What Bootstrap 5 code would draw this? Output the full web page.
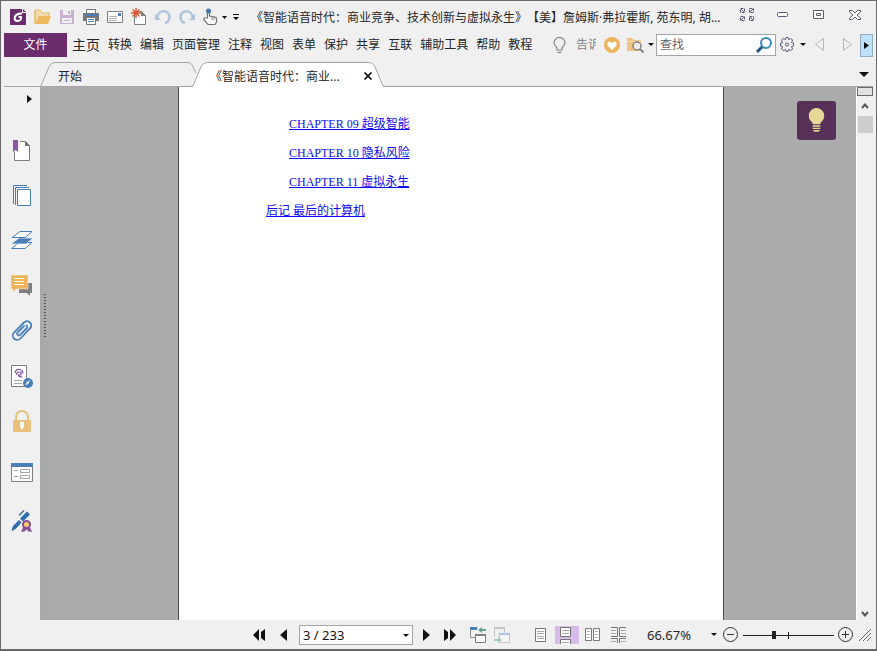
<!DOCTYPE html>
<html lang="zh-CN">
<head>
<meta charset="utf-8">
<meta name="viewport" content="width=device-width, initial-scale=1">
<title>PDF 阅读器</title>
<link href="https://cdn.jsdelivr.net/npm/bootstrap@5.3.0/dist/css/bootstrap.min.css" rel="stylesheet">
<style>
body{font-family:"Noto Sans","Noto Sans CJK SC",sans-serif;font-size:12px;line-height:18px;color:#262626;background:#f0f0f0}
.app{height:100vh;border:1px solid #6b686b;border-bottom-width:2px;background:#f0f0f0}
.plain{border:0;background:none;padding:0;color:inherit;display:flex;align-items:center;justify-content:center;flex:none}
svg{display:block;flex:none}
.titlebar{height:32px;padding-left:6px;padding-right:3px}
.tool{width:24px;height:24px}
.slim{width:22px;height:24px}
.hand-btn{width:32px;height:24px;gap:3px}
.caret-btn{width:10px;height:24px}
.win-btn{width:36px;height:28px;margin-bottom:4px}
.doc-title{margin-left:10px;padding-top:2px;text-spacing-trim:space-all}
.menubar{height:24px;padding-left:3px;padding-right:3px}
.file-btn{width:63px;height:24px;background:#6a2c6c;color:#fff;margin-right:5px}
.menu-list{gap:8px}
.menu-list a{text-decoration:none;white-space:nowrap;color:#262626}
.menu-list .home-link{font-size:14px}
.tell{width:20px;color:#808080;overflow:hidden;white-space:nowrap;justify-content:flex-start}
.find{width:120px;height:22px;border:1px solid #a5a5a5;background:#fff}
.find input{border:0;outline:0;background:none;width:90px;padding:0 3px;color:#333}
.find input::placeholder{color:#666;opacity:1}
.more-btn{width:13px;height:23px;background:#bfe1fb;border:1px solid #93adc2}
.tabs{height:30px;padding-left:39px}
.tabs::after{content:"";position:absolute;left:3px;right:3px;bottom:0;border-bottom:1px solid #a5a5a5}
.doc-tab{position:relative;height:25px;padding-left:18px;padding-top:6px}
.doc-tab svg.shape{position:absolute;left:0;top:0}
.tab-start{width:156px}
.tab-doc{width:192px;margin-left:-4px;z-index:2;padding-left:18px}
.doc-tab .label{position:relative;justify-content:flex-start}
.tab-x{position:relative;width:16px;height:16px;margin-right:8px}
.side{width:39px;padding-left:3px}
.side .plain{width:36px;height:45px;align-items:flex-start;padding-top:12px}
.side .expand{height:24px;margin-bottom:17px;padding:8px 0 0 14px}
.side .form-btn{margin-top:7px;padding-top:13px}
.side .sign-btn{margin-top:3px}
.desk{background:#ababab}
.splitter{width:6px;background:#a7a9ab;padding-left:3px;padding-bottom:74px}
.dots{width:4px;height:45px;background:conic-gradient(from 90deg at 1px 1px,transparent 270deg,#555 0) 0 0/3px 3px}
.sheet{width:546px;background:#fff;border:solid #4d4d4d;border-width:0 1px;padding:28px 87px}
.toc{font-family:"Liberation Serif","Noto Sans CJK SC",serif;gap:11px}
.toc a{color:#0d0df2;text-decoration:underline}
.toc .sub-item{padding-left:23px}
.tip{position:absolute;top:14px;right:20px;width:39px;height:39px;background:#573157;border-radius:3px}
.scroller{width:17px;background:#f0f0f0;border-left:1px solid #fff;margin-right:3px}
.split-box{height:9px;border:1px solid #6b6b6b;background:#e1e1e1;align-self:stretch}
.thumb{width:15px;height:17px;background:#cdcdcd}
.arrow-btn{width:16px;height:20px}
.arrow-down{height:12px}
.status{height:29px;font-size:13px;padding-left:246px;padding-top:1px}
.page-box{position:relative;width:114px;height:20px;margin:0 1px 0 4px}
.page-box select{appearance:none;width:100%;height:100%;border:1px solid #a5a5a5;border-radius:0;background:#fff;padding:0 3px;line-height:18px;color:#111}
.page-box svg{position:absolute;right:4px;top:9px;pointer-events:none}
.layouts{margin-left:15px;gap:2px}
.zoom-range{position:relative;width:91px;height:16px}
.zoom-range::after{content:"";position:absolute;left:45px;top:5px;width:1px;height:7px;background:#222}
.zoom-range input{appearance:none;display:block;width:100%;height:16px;margin:0;background:linear-gradient(#222,#222) 0 8px/100% 1px no-repeat}
.zoom-range input::-webkit-slider-thumb{appearance:none;width:4px;height:8px;background:#222}
.on{background:#d7bbe8}
</style>
<script src="https://cdn.jsdelivr.net/npm/bootstrap@5.3.0/dist/js/bootstrap.bundle.min.js"></script>
</head>
<body>
<div class="app d-flex flex-column overflow-hidden">
<header>
 <div class="titlebar d-flex align-items-center">
  <button class="plain tool" aria-label="应用"><svg width="20" height="18" viewBox="0 0 20 18"><path d="M1 1h12v4h4v12H1z" fill="#6a2c6c"/><path d="M14 1l3 3h-3z" fill="#6a2c6c"/><path d="M13 5.500Q8 5 6 8.500 4.500 13 9 13 12.500 12.500 12 9H9.500" stroke="#fff" stroke-width="2" fill="none"/></svg></button>
  <button class="plain tool" aria-label="打开"><svg width="18" height="18" viewBox="0 0 18 18"><path d="M1 15V2h5l2 3h7v3" fill="#f5dcae" stroke="#e9b566"/><path d="M1 16L5 8h12l-3 8z" fill="#efb85f"/><path d="M1 16V3" stroke="#e9b566"/></svg></button>
  <button class="plain tool" aria-label="保存"><svg width="14" height="14" viewBox="0 0 14 14"><path d="M0 0h14v14H0z" fill="#c9b0d3"/><path d="M3 0h8v5H3zM2 8h10v5H2z" fill="#f0f0f0"/><path d="M8 1h2v3H8zM4 10h6v1H4z" fill="#c9b0d3"/></svg></button>
  <button class="plain tool" aria-label="打印"><svg width="16" height="16" viewBox="0 0 16 16"><path d="M0 4h16v8H0z" fill="#777"/><path d="M3.500.500h9v4h-9z" fill="#fff" stroke="#777"/><path d="M2 5h12v2H2z" fill="#4a80b8"/><path d="M3.500 8.500h9v7h-9z" fill="#fff" stroke="#777"/><path d="M5 10.500h6M5 12.500h6" stroke="#4a80b8"/></svg></button>
  <button class="plain tool" aria-label="邮件"><svg width="16" height="14" viewBox="0 0 16 14"><path d="M.5 1.500h15v11H.5z" fill="#fff" stroke="#808080"/><path d="M2 6.500h8M2 8.500h8M2 10.500h8" stroke="#b5b5b5"/><path d="M11 3h3v3h-3z" fill="#4a80b8"/></svg></button>
  <button class="plain tool" aria-label="新建"><svg width="16" height="18" viewBox="0 0 16 18"><path d="M3.500 3.500h7l4 4v9h-11z" fill="#fff" stroke="#808080"/><path d="M10 3l5 5h-5z" fill="#808080"/><path d="M5 0v10M0 5h10M1.500 1.500l7 7M8.500 1.500l-7 7" stroke="#d9532f" stroke-width="1.400"/></svg></button>
  <button class="plain tool" aria-label="撤销"><svg width="16" height="16" viewBox="0 0 16 16"><path d="M2.500 8A6 6 0 1 1 10 14" fill="none" stroke="#adc5de" stroke-width="2.500"/><path d="M0 5v6h6z" fill="#adc5de"/></svg></button>
  <button class="plain tool" aria-label="重做"><svg width="16" height="16" viewBox="0 0 16 16"><path d="M13.500 8A6 6 0 1 0 6 14" fill="none" stroke="#adc5de" stroke-width="2.500"/><path d="M16 5v6h-6z" fill="#adc5de"/></svg></button>
  <button class="plain hand-btn" aria-label="手形工具"><svg width="16" height="18" viewBox="0 0 16 18"><path d="M4.500 10V3Q5.500 1 6.500 3V8L12 9l1.500 1v4L12 16.500H5L1 12V10z" fill="#fff" stroke="#707070" stroke-width="1.200"/><path d="M9 9v3M11 9v3" stroke="#808080"/><circle cx="5.500" cy="3" r="2.500" fill="#3f78b3"/></svg><svg width="5" height="3"><path d="M0 0h5L2.500 3z" fill="#111"/></svg></button>
  <button class="plain caret-btn" aria-label="自定义"><svg width="6" height="6"><path d="M0 0h6v1H0zM0 3h6L3 6z" fill="#111"/></svg></button>
  <div class="doc-title flex-fill text-truncate">《智能语音时代：商业竞争、技术创新与虚拟永生》【美】詹姆斯·弗拉霍斯, 苑东明, 胡...</div>
  <button class="plain win-btn" aria-label="全屏"><svg width="14" height="14" viewBox="0 0 14 14" fill="none" stroke="#5e5c72"><path d="M.5.5H4.500V4.500H.5zM9.500.5h4v4h-4zM.5 8.500h4v4h-4zM9.500 8.500h4v4h-4z" stroke-dasharray="3 1"/><path d="M1 1l3 3M13 1l-3 3M1 12l3-3M13 12l-3-3"/></svg></button>
  <button class="plain win-btn" aria-label="最小化"><svg width="12" height="6"><rect x=".5" y=".5" width="10" height="4" rx="1" fill="#fff" stroke="#5e5c72"/></svg></button>
  <button class="plain win-btn" aria-label="还原"><svg width="12" height="10" fill="#fff" stroke="#5e5c72"><path d="M.5.5h10v8H.5zM3.500 3.500h4v2h-4z"/></svg></button>
  <button class="plain win-btn" aria-label="关闭"><svg width="12" height="10" viewBox="0 0 12 10"><path d="M.5.5h3L6 3l2.500-2.500h3V2L8 5l3.500 3v1.500h-3L6 7 3.500 9.500h-3V8L4 5 .5 2z" fill="#fff" stroke="#5e5c72"/></svg></button>
 </div>
 <nav class="menubar d-flex align-items-center" aria-label="主菜单">
  <button class="plain file-btn">文件</button>
  <div class="menu-list d-flex align-items-center"><a class="home-link" href="#">主页</a><a href="#">转换</a><a href="#">编辑</a><a href="#">页面管理</a><a href="#">注释</a><a href="#">视图</a><a href="#">表单</a><a href="#">保护</a><a href="#">共享</a><a href="#">互联</a><a href="#">辅助工具</a><a href="#">帮助</a><a href="#">教程</a></div>
  <div class="d-flex align-items-center ms-auto">
   <button class="plain tool" aria-label="提示"><svg width="14" height="16" viewBox="0 0 14 16" fill="none" stroke="#858585" stroke-width="1.200"><path d="M4 11Q1 8 1 6a5.500 5.500 0 0 1 11 0Q12 8 9 11v2H4zM4.500 15.400h4"/></svg></button>
   <button class="plain tell ms-1">告诉</button>
   <button class="plain tool ms-1" aria-label="收藏"><svg width="16" height="16" viewBox="0 0 16 16"><circle cx="8" cy="8" r="8" fill="#ecb35b"/><path d="M8 13L3.500 8.500Q2.500 5 5.500 4.500 7 4.500 8 6 9 4.500 10.500 4.500 13.500 5 12.500 8.500z" fill="#fff"/></svg></button>
   <button class="plain slim" aria-label="查找文件夹"><svg width="18" height="16" viewBox="0 0 18 16"><path d="M1 14V1h5l2 2h7v11z" fill="#efc382"/><path d="M1 4.500h14" stroke="#f7ddb3"/><circle cx="11" cy="9" r="4" fill="#f0f0f0" stroke="#858585" stroke-width="1.500"/><path d="M14 12l3.500 3.500" stroke="#858585" stroke-width="2"/></svg></button>
   <button class="plain caret-btn" aria-label="查找选项"><svg width="6" height="4"><path d="M0 0h6L3 3z" fill="#111"/></svg></button>
   <form class="find d-flex align-items-center justify-content-between"><input type="text" placeholder="查找" aria-label="查找"><button type="button" class="plain" aria-label="搜索"><svg width="20" height="18" viewBox="0 0 20 18"><path d="M2 16l6-6" stroke="#1e5180" stroke-width="3"/><circle cx="11" cy="7" r="5" fill="#fff" stroke="#388cba" stroke-width="2"/></svg></button></form>
   <button class="plain slim" aria-label="设置"><svg width="16" height="16" viewBox="0 0 16 16" fill="none" stroke="#5e5c72"><path d="M7 .5h2l.5 2 2.500-1 1.500 1.500-1 2.500 2 .5v3l-2 .5 1 2.500-1.500 1.500-2.500-1-.5 2H7l-.5-2-2.500 1L2.500 12l1-2.500-2-.5V6l2-.5-1-2.500L4 1.500l2.500 1z"/><circle cx="8" cy="7.500" r="1.500"/></svg></button>
   <button class="plain caret-btn" aria-label="设置选项"><svg width="6" height="4"><path d="M0 0h6L3 3z" fill="#111"/></svg></button>
   <button class="plain tool" aria-label="上一个"><svg width="10" height="14"><path d="M8.500.5v12L.5 6.500z" fill="none" stroke="#b5b5b5"/></svg></button>
   <button class="plain tool ms-1" aria-label="下一个"><svg width="10" height="14"><path d="M.5.5v12l8-6z" fill="none" stroke="#b5b5b5"/></svg></button>
   <button class="plain more-btn" aria-label="更多"><svg width="5" height="7"><path d="M0 0v7l5-3.500z" fill="#111"/></svg></button>
  </div>
 </nav>
 <div class="tabs position-relative d-flex align-items-end">
  <div class="doc-tab tab-start"><svg class="shape" width="156" height="25"><path d="M.5 24.500L9 5Q11 .5 15 .5H147Q152 .5 153 5L156 11" fill="none" stroke="#a5a5a5"/></svg><button class="plain label">开始</button></div>
  <div class="doc-tab tab-doc d-flex align-items-start justify-content-between"><svg class="shape" width="192" height="25"><path d="M.5 25L9 5Q11 .5 15 .5H176Q181 .5 183 5L191.500 25" fill="#fff" stroke="#a5a5a5"/></svg><button class="plain label">《智能语音时代：商业...</button><button class="plain tab-x" aria-label="关闭标签"><svg width="8" height="8"><path d="M.5.5l7 7M7.500.5l-7 7" stroke="#111" stroke-width="1.600"/></svg></button></div>
  <button class="plain ms-auto tool" aria-label="标签列表"><svg width="10" height="6"><path d="M0 0h10L5 5z" fill="#111"/></svg></button>
 </div>
</header>
<main class="d-flex flex-fill overflow-hidden">
 <aside class="side">
  <button class="plain expand" aria-label="展开"><svg width="6" height="8"><path d="M1 0v8l5-4z" fill="#111"/></svg></button>
  <button class="plain" aria-label="书签"><svg width="18" height="22" viewBox="0 0 18 22"><path d="M1.500 1.500h11l4 4v15h-15z" fill="#fff" stroke="#808080"/><path d="M12 1l5 5h-5z" fill="#707070"/><path d="M0 0h7v13L4 10 0 13z" fill="#f0f0f0"/><path d="M0 0h5v12l-2.500-2L0 12z" fill="#8a55a3"/></svg></button>
  <button class="plain" aria-label="页面"><svg width="18" height="22" viewBox="0 0 18 22" fill="none" stroke="#4a80b8"><path d="M.5 19V.5H14M2.500 20V2.500H16"/><path d="M4.500 4.500h13v16h-13z" fill="#fff"/></svg></button>
  <button class="plain" aria-label="图层"><svg width="22" height="20" viewBox="0 0 22 20"><path d="M.5 18.500L8 12.500H21L14 18.500z" fill="#fff" stroke="#4a80b8"/><path d="M0 14L8 8h14l-7 6z" fill="#4a80b8" stroke="#f0f0f0" stroke-width=".7"/><path d="M1 7.500L9 1.500H21L14 7.500z" fill="#fff" stroke="#4a80b8"/></svg></button>
  <button class="plain" aria-label="注释"><svg width="22" height="22" viewBox="0 0 22 22"><path d="M8 8h13v10h-2v3l-3-3H8z" fill="#808080"/><path d="M0 0h17v14H5l-3 4v-4H0z" fill="#efb45a" stroke="#f0f0f0" stroke-width=".5"/><path d="M3 3.500h10M3 6.500h10M3 9.500h10" stroke="#fff"/></svg></button>
  <button class="plain" aria-label="附件"><svg width="20" height="22" viewBox="0 0 20 22" fill="none" stroke="#4a80b8" stroke-width="1.800" stroke-linecap="round"><path d="M8 6.500L12 2.500A4 4 0 0 1 18 8.500L8.500 18.500A4.300 4.300 0 0 1 2 12.500L10.500 4M14.500 5.500A2 2 0 0 1 14.500 8.500L8 15A1.800 1.800 0 0 1 5.500 12.500L12 6"/></svg></button>
  <button class="plain" aria-label="签名"><svg width="22" height="24" viewBox="0 0 22 24"><path d="M.5.500h15v21H.5z" fill="#fff" stroke="#808080"/><path d="M4 8Q5 4 8 4.500q4 0 4 4M5.500 10Q5.500 7 8 7h2v3H7.500q0 2 4 2" fill="none" stroke="#8a55a3" stroke-width="1.200"/><path d="M3 15.500h8M3 18.500h8" stroke="#a5a5a5"/><circle cx="17" cy="18" r="5" fill="#4a80b8"/><path d="M14.500 20.500l1-3 3.500-2.500-1.500 3.500z" fill="#fff"/></svg></button>
  <button class="plain" aria-label="安全"><svg width="18" height="22" viewBox="0 0 18 22"><path d="M3 11V7a6 6 0 0 1 12 0v4" fill="none" stroke="#ebc07b" stroke-width="2"/><rect y="10" width="18" height="12" rx="1" fill="#ebc07b"/><path d="M7 12h4v4l-1 3H8l-1-3z" fill="#fff"/></svg></button>
  <button class="plain form-btn" aria-label="表单域"><svg width="22" height="19" viewBox="0 0 22 19"><path d="M.5.500h21v18H.5z" fill="#fff" stroke="#808080"/><path d="M0 0h22v4H0z" fill="#4a80b8"/><path d="M3 7.500h4M3 13.500h4M9.500 6.500h9v3h-9zM9.500 12.500h9v3h-9z" fill="none" stroke="#a5a5a5"/></svg></button>
  <button class="plain sign-btn" aria-label="数字签名"><svg width="22" height="22" viewBox="0 0 22 22"><path d="M1 20.500l1.500-4.500L8 10.500l2 2-5.500 6z" fill="#2f6dad" stroke="#2f6dad" stroke-linejoin="round"/><path d="M10 8.500l6-6 2 2-6 6zM8 5.500L13 .5" fill="#2f6dad" stroke="#2f6dad" stroke-width="1.400"/><path d="M10 22l2.500-6h6l2.500 6-3.500-.5-2-2-2 2z" fill="#8a55a3"/><circle cx="15.500" cy="14.500" r="3.500" fill="#fbd06a" stroke="#8a4a9a" stroke-width="2"/></svg></button>
 </aside>
 <div class="desk d-flex flex-fill position-relative">
  <div class="splitter d-flex align-items-center"><div class="dots"></div></div>
  <article class="sheet mx-auto">
   <div class="toc d-flex flex-column align-items-start"><a class="sub-item" href="#">CHAPTER 09 超级智能</a><a class="sub-item" href="#">CHAPTER 10 隐私风险</a><a class="sub-item" href="#">CHAPTER 11 虚拟永生</a><a href="#">后记 最后的计算机</a></div>
  </article>
  <button class="plain tip" aria-label="小提示"><svg width="17" height="25" viewBox="0 0 18 26"><path d="M5 17Q5 15 3 13.500A8.200 8.200 0 1 1 15 13.500Q13 15 13 17z" fill="#e5d796"/><path d="M5 18.800h8M5 21.300h8" stroke="#e5d796" stroke-width="1.400"/><path d="M5 23h8l-2 2H7z" fill="#e5d796"/></svg></button>
 </div>
 <div class="scroller d-flex flex-column align-items-center">
  <div class="split-box"></div>
  <button class="plain arrow-btn" aria-label="向上滚动"><svg width="8" height="6"><path d="M1 5l3-3.500L7 5" fill="none" stroke="#555" stroke-width="2"/></svg></button>
  <div class="thumb"></div>
  <button class="plain arrow-btn arrow-down mt-auto" aria-label="向下滚动"><svg width="8" height="6"><path d="M1 1l3 3.500L7 1" fill="none" stroke="#555" stroke-width="2"/></svg></button>
 </div>
</main>
<footer class="status d-flex align-items-center">
 <button class="plain tool" aria-label="首页"><svg width="14" height="12"><path d="M7 0v12L1 6zM13 0v12L9 9V3z" fill="#111"/></svg></button>
 <button class="plain tool" aria-label="上一页"><svg width="8" height="12"><path d="M8 0v12L1 6z" fill="#111"/></svg></button>
 <div class="page-box"><select aria-label="页码"><option>3 / 233</option></select><svg width="6" height="3"><path d="M0 0h6L3 3z" fill="#111"/></svg></div>
 <button class="plain tool" aria-label="下一页"><svg width="8" height="12"><path d="M1 0v12l7-6z" fill="#111"/></svg></button>
 <button class="plain tool" aria-label="末页"><svg width="14" height="12"><path d="M1 0v12l4-3V3zM7 0v12l6-6z" fill="#111"/></svg></button>
 <button class="plain tool ms-1" aria-label="后退视图"><svg width="16" height="16" viewBox="0 0 16 16"><path d="M.5 10.500v-9h7M.5 10.500H5" fill="none" stroke="#909090"/><path d="M0 0h7v3H0z" fill="#4a80b8"/><path d="M8 3l4-3v2h4v2h-4v2z" fill="#62a58d"/><path d="M5.500 7.500h10v8h-10z" fill="#fff" stroke="#808080"/><path d="M5 7h11v2H5z" fill="#808080"/></svg></button>
 <button class="plain tool" aria-label="前进视图"><svg width="16" height="16" viewBox="0 0 16 16"><path d="M.5 1.500h10v4M.5 1.500V10" fill="none" stroke="#c5c5c5"/><path d="M0 0h11v2H0z" fill="#c5c5c5"/><path d="M5.500 7.500h10v8h-10z" fill="#f5f5f5" stroke="#c5c5c5"/><path d="M5 6h11v2H5z" fill="#a8c4df"/><path d="M0 12h4v-2l4 3-4 3v-2H0z" fill="#a5cabd"/></svg></button>
 <div class="layouts d-flex align-items-center">
  <button class="plain tool" aria-label="单页"><svg width="12" height="14"><path d="M.5.5h10v13H.5z" fill="#fff" stroke="#777"/><path d="M2 3.500h7M2 5.500h7M2 8.500h7M2 10.500h7" stroke="#aaa"/></svg></button>
  <button class="plain on" aria-label="连续"><svg width="24" height="18" fill="#fff" stroke="#777"><path d="M5.500 1.500h10v9h-10zM5.500 18v-4.500h10V18"/><path d="M7 4.500h7M7 7.500h7M7 16.500h7" stroke="#aaa"/></svg></button>
  <button class="plain tool" aria-label="双页"><svg width="16" height="14"><path d="M.5.5h6v12h-6zM8.500.5h6v12h-6z" fill="#fff" stroke="#777"/><path d="M2 3.500h3M2 6.500h3M2 9.500h3M10 3.500h3M10 6.500h3M10 9.500h3" stroke="#aaa"/></svg></button>
  <button class="plain tool" aria-label="连续双页"><svg width="16" height="16" fill="none"><path d="M0 .5h6.500v9H0M15 .5H8.500v9H15M0 11.500h6.500V16M15 11.500H8.500V16" stroke="#777"/><path d="M0 3.500h5M0 6.500h5M10 3.500h5M10 6.500h5M0 14.500h5M10 14.500h5" stroke="#aaa"/></svg></button>
 </div>
 <span class="ms-3">66.67%</span>
 <button class="plain caret-btn ms-auto" aria-label="缩放比例"><svg width="6" height="4"><path d="M0 0h6L3 3z" fill="#111"/></svg></button>
 <button class="plain ms-1" aria-label="缩小"><svg width="16" height="16" fill="none" stroke="#333"><circle cx="7.500" cy="7.500" r="7"/><path d="M4 7.500h7"/></svg></button>
 <div class="zoom-range mx-1"><input type="range" min="0" max="100" value="33" aria-label="缩放"></div>
 <button class="plain" aria-label="放大"><svg width="16" height="16" fill="none" stroke="#333"><circle cx="7.500" cy="7.500" r="7"/><path d="M4 7.500h7M7.500 4v7"/></svg></button>
 <svg class="ms-1 me-1" width="14" height="14" stroke="#666"><path d="M1 13L13 1M5 13l8-8M9 13l4-4"/></svg>
</footer>
</div>
</body>
</html>
